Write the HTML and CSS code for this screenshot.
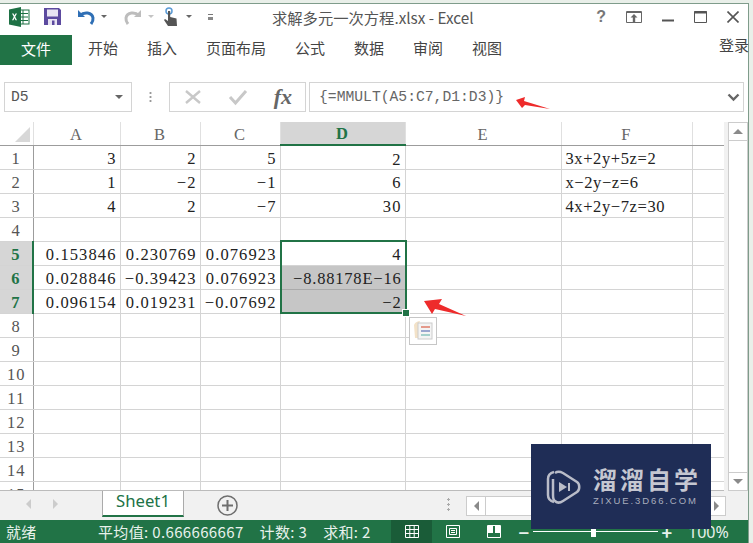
FILE: index.html
```html
<!DOCTYPE html>
<html lang="zh-CN">
<head>
  <meta charset="UTF-8">
  <title>求解多元一次方程.xlsx - Excel</title>
  <link rel="stylesheet" href="styles.css">
</head>
<body>
  <div class="window">
    <div class="titlebar">
      <div class="qat">
        <svg class="app-icon" width="21" height="20" viewBox="0 0 21 20">
          <rect x="7" y="3" width="13" height="14" fill="#fff" stroke="#1e7145"/>
          <path d="M10 6.500h9M10 10h9M10 13.500h9M14 3v14" stroke="#1e7145" fill="none"/>
          <path d="M0 2.500 12 0v20L0 17.500z" fill="#1e7145"/>
          <path d="m3 6.500 1.800 3.300L3 13.200h1.500l1-2.200 1 2.200H8L6.200 9.800 8 6.500H6.500l-1 2.100-1-2.100z" fill="#fff"/>
        </svg>
        <svg class="save-icon" width="17" height="17" viewBox="0 0 17 17">
          <path d="M0 0h15l2 2v15H0z" fill="#5c4a9f"/>
          <rect x="3" y="1.500" width="11" height="7" fill="#e8e4f2"/>
          <rect x="4" y="11" width="9" height="6" fill="#e8e4f2"/>
          <rect x="8" y="12.500" width="2.500" height="4.500" fill="#5c4a9f"/>
        </svg>
        <svg class="undo-icon" width="18" height="16" viewBox="0 0 18 16">
          <path d="M1 1v7h7" fill="#2f6fb5"/>
          <path d="M3 6.500C7 2.500 15 3 16 9c.300 2-.500 4-2 6" fill="none" stroke="#2f6fb5" stroke-width="3"/>
        </svg>
        <i class="caret"></i>
        <svg class="redo-icon" width="18" height="16" viewBox="0 0 18 16">
          <path d="M17 1v7h-7" fill="#bdbdbd"/>
          <path d="M15 6.500C11 2.500 3 3 2 9c-.300 2 .500 4 2 6" fill="none" stroke="#bdbdbd" stroke-width="3"/>
        </svg>
        <i class="caret light"></i>
        <svg class="touch-icon" width="16" height="20" viewBox="0 0 16 20">
          <circle cx="6" cy="4" r="3" fill="none" stroke="#5b9bd5" stroke-width="1.500"/>
          <path d="M5 4h2.200v6l6.300 1.500.500 7.500H5L1 13l1-1 3 2z" fill="#555"/>
        </svg>
        <i class="caret"></i>
        <i class="customize"></i>
      </div>
      <div class="doc-title">求解多元一次方程.xlsx - Excel</div>
      <div class="win-btns">
        <span class="help">?</span>
        <svg width="16" height="12" viewBox="0 0 16 12"><path d="M.5.500h15v11H.5z" fill="none" stroke="#666"/><path d="M1 1.500h14" stroke="#666"/><path d="M8 3 4.500 6.500h2.300V11h2.400V6.500h2.300z" fill="#666"/></svg>
        <svg width="12" height="12" viewBox="0 0 12 12"><path d="M0 9.500h12" stroke="#555" stroke-width="2"/></svg>
        <svg width="13" height="12" viewBox="0 0 13 12"><path d="M.5.500h12v11H.5z" fill="none" stroke="#555"/><path d="M0 1.500h13" stroke="#555" stroke-width="2"/></svg>
        <svg width="12" height="12" viewBox="0 0 12 12"><path d="m.5.500 11 11m0-11-11 11" stroke="#555" stroke-width="1.600"/></svg>
      </div>
    </div>

    <div class="tabs">
      <span class="tab-file">文件</span>
      <span>开始</span>
      <span>插入</span>
      <span>页面布局</span>
      <span>公式</span>
      <span>数据</span>
      <span>审阅</span>
      <span>视图</span>
      <span class="login">登录</span>
    </div>

    <div class="formula-bar">
      <div class="name-box">D5<i class="caret dark"></i></div>
      <div class="grip"></div>
      <div class="fx-box">
        <svg width="20" height="18" viewBox="0 0 20 18"><path d="m3 3 14 12m0-12L3 15" stroke="#c8c8c8" stroke-width="2.400"/></svg>
        <svg width="20" height="18" viewBox="0 0 20 18"><path d="m2 9 5.500 6L18 3" fill="none" stroke="#c8c8c8" stroke-width="3"/></svg>
        <span class="fx">fx</span>
      </div>
      <div class="formula">{=MMULT(A5:C7,D1:D3)}
        <svg class="chevron" width="13" height="9" viewBox="0 0 13 9"><path d="m1.500 1.500 5 5 5-5" fill="none" stroke="#666" stroke-width="2.400"/></svg>
      </div>
    </div>

    <div class="workbook">
      <div class="sheet-row">
        <div class="sheet">
          <table class="cells">
            <colgroup>
              <col class="col-head"><col class="col-a"><col class="col-b"><col class="col-c"><col class="col-d"><col class="col-e"><col class="col-f"><col class="col-g">
            </colgroup>
            <thead>
              <tr>
                <th class="corner"><i></i></th><th>A</th><th>B</th><th>C</th><th class="on-col">D</th><th>E</th><th>F</th><th class="blank"></th>
              </tr>
            </thead>
            <tbody>
              <tr><th>1</th><td>3</td><td>2</td><td>5</td><td>2</td><td></td><td class="txt">3x+2y+5z=2</td><td></td></tr>
              <tr><th>2</th><td>1</td><td>−2</td><td>−1</td><td>6</td><td></td><td class="txt">x−2y−z=6</td><td></td></tr>
              <tr><th>3</th><td>4</td><td>2</td><td>−7</td><td>30</td><td></td><td class="txt">4x+2y−7z=30</td><td></td></tr>
              <tr><th>4</th><td></td><td></td><td></td><td></td><td></td><td></td><td></td></tr>
              <tr><th class="on-row">5</th><td>0.153846</td><td>0.230769</td><td>0.076923</td><td>4</td><td></td><td></td><td></td></tr>
              <tr><th class="on-row">6</th><td>0.028846</td><td>−0.39423</td><td>0.076923</td><td class="sel">−8.88178E−16</td><td></td><td></td><td></td></tr>
              <tr><th class="on-row">7</th><td>0.096154</td><td>0.019231</td><td>−0.07692</td><td class="sel">−2</td><td></td><td></td><td></td></tr>
              <tr><th>8</th><td></td><td></td><td></td><td></td><td></td><td></td><td></td></tr>
              <tr><th>9</th><td></td><td></td><td></td><td></td><td></td><td></td><td></td></tr>
              <tr><th>10</th><td></td><td></td><td></td><td></td><td></td><td></td><td></td></tr>
              <tr><th>11</th><td></td><td></td><td></td><td></td><td></td><td></td><td></td></tr>
              <tr><th>12</th><td></td><td></td><td></td><td></td><td></td><td></td><td></td></tr>
              <tr><th>13</th><td></td><td></td><td></td><td></td><td></td><td></td><td></td></tr>
              <tr><th>14</th><td></td><td></td><td></td><td></td><td></td><td></td><td></td></tr>
              <tr><th>15</th><td></td><td></td><td></td><td></td><td></td><td></td><td></td></tr>
            </tbody>
          </table>
          <div class="selection"><i class="handle"></i></div>
          <svg class="paste-opt" width="28" height="28" viewBox="0 0 28 28">
            <rect x=".5" y=".5" width="27" height="27" fill="#fff" stroke="#c6c6c6"/>
            <path d="M5 8c1-3 4-4 6-4l-2 5 1 12H6z" fill="#f3e2c8"/>
            <rect x="9" y="6" width="14" height="16" fill="#f4f4f4" stroke="#ccc"/>
            <path d="M12 10h9" stroke="#e49a8c" stroke-width="2"/>
            <path d="M12 14h9" stroke="#9aa6cf" stroke-width="2"/>
            <path d="M12 18h9" stroke="#a5d0cc" stroke-width="2"/>
          </svg>
        </div>
        <div class="vscroll">
          <div class="vbtn"><i class="tri up"></i></div>
          <div class="vtrack"></div>
          <div class="vbtn"><i class="tri down"></i></div>
        </div>
      </div>
      <div class="sheet-tabs">
        <div class="tab-nav"><i class="tri left"></i><i class="tri right"></i></div>
        <div class="sheet-tab">Sheet1</div>
        <svg class="add-sheet" width="21" height="21" viewBox="0 0 21 21"><circle cx="10.500" cy="10.500" r="9.500" fill="none" stroke="#6e6e6e" stroke-width="1.500"/><path d="M10.500 5v11M5 10.500h11" stroke="#6e6e6e" stroke-width="2"/></svg>
        <div class="tab-grip"></div>
        <div class="hscroll">
          <div class="hbtn"><i class="tri left"></i></div>
          <div class="htrack"></div>
          <div class="hbtn"><i class="tri right"></i></div>
        </div>
      </div>
    </div>

    <div class="statusbar">
      <span class="ready">就绪</span>
      <span class="stat">平均值: 0.666666667</span>
      <span class="stat">计数: 3</span>
      <span class="stat">求和: 2</span>
      <div class="views">
        <span class="view active"><svg width="14" height="13" viewBox="0 0 14 13"><path d="M.5.500h13v12H.5zM.5 4.500h13M.5 8.500h13M4.800.500v12M9.200.500v12" fill="none" stroke="#fff"/></svg></span>
        <span class="view"><svg width="14" height="13" viewBox="0 0 14 13"><path d="M.5.500h13v12H.5zM3.500 3.500h7v6h-7zM5 5.500h4M5 7.500h4" fill="none" stroke="#fff"/></svg></span>
        <span class="view"><svg width="14" height="13" viewBox="0 0 14 13"><path d="M.5.500h13v12H.5z" fill="none" stroke="#fff"/><path d="M1 1h5v7H1zM8 1h5v7H8z" fill="#fff"/></svg></span>
      </div>
      <div class="zoom">
        <span class="zoom-sign">−</span>
        <div class="slider"><i></i></div>
        <span class="zoom-sign">+</span>
        <span class="zoom-val">100%</span>
      </div>
    </div>
  </div>

  <!-- red arrows someone drew on the screenshot -->
  <svg class="arrow arrow-formula" width="34" height="12" viewBox="0 0 34 12"><path d="M0 3 9 0 8 4l26 8-25-4-3 3z" fill="#ee2b2b"/></svg>
  <svg class="arrow arrow-cell" width="42" height="18" viewBox="0 0 42 18"><path d="M0 2 18 0l-3 5 27 12-31-7-3 5z" fill="#ee2b2b"/></svg>

  <div class="watermark">
    <svg width="36" height="36" viewBox="0 0 36 36">
      <path d="M8 3C4 4 2 7 2 10v16c0 3 2 6 6 7" fill="none" stroke="#b9bcc8" stroke-width="2.500"/>
      <path d="M9 4c3-2 6-1 8 0l14 9c3 2 3 8 0 10L17 32c-3 2-6 2-8 0-2-1-2-4-2-6V10" fill="none" stroke="#b9bcc8" stroke-width="2.500"/>
      <path d="M13 13l8 5-8 5z" fill="#b9bcc8"/>
      <path d="M23 14v8" stroke="#b9bcc8" stroke-width="2"/>
    </svg>
    <div class="wm-text">
      <div class="wm-cn">溜溜自学</div>
      <div class="wm-en">ZIXUE.3D66.COM</div>
    </div>
  </div>
</body>
</html>
```

FILE: styles.css
```css
* {
  box-sizing: border-box;
}

html, body {
  margin: 0;
  height: 100%;
  overflow: hidden;
}

body {
  width: 753px;
  height: 543px;
  position: relative;
  background-color: #e9efe9;
  font-family: "Noto Sans CJK SC", sans-serif;
  color: #444;
}

.window {
  width: 749px;
  height: 540px;
  margin-top: 3px;
  background-color: #fff;
  border-top: 1px solid #7f9c8b;
  border-right: 1px solid #7f9c8b;
  display: flex;
  flex-direction: column;
}

/* title bar */
.titlebar {
  height: 31px;
  padding-bottom: 6px;
  display: flex;
  align-items: center;
  flex: none;
  position: relative;
}

.qat {
  display: flex;
  align-items: center;
  padding-left: 9px;
  width: 272px;
}

.save-icon {
  margin-left: 14px;
}

.undo-icon {
  margin-left: 16px;
}

.redo-icon {
  margin-left: 17px;
}

.touch-icon {
  margin-left: 9px;
}

.caret {
  display: inline-block;
  width: 0;
  height: 0;
  margin-left: 6px;
  border-left: 3px solid transparent;
  border-right: 3px solid transparent;
  border-top: 3px solid #666;
}

.caret.light {
  border-top-color: #c4c4c4;
}

.touch-icon + .caret {
  margin-left: 7px;
}

.customize {
  width: 5px;
  height: 6px;
  margin-left: 16px;
  border-top: 1px solid #777;
  border-bottom: 3px solid #888;
}

.doc-title {
  font-size: 15.300px;
  white-space: nowrap;
  color: #555;
}

.win-btns {
  margin-left: auto;
  display: flex;
  align-items: center;
  gap: 20px;
  padding-right: 9px;
}

.help {
  font-family: "Liberation Sans", sans-serif;
  font-weight: bold;
  font-size: 16px;
  color: #777;
}

/* ribbon tabs */
.tabs {
  height: 30px;
  padding-bottom: 6px;
  display: flex;
  align-items: center;
  flex: none;
  gap: 29px;
  font-size: 15px;
  color: #444;
  position: relative;
}

.tab-file {
  width: 72px;
  height: 30px;
  margin-top: 6px;
  margin-right: -13px;
  line-height: 28px;
  text-align: center;
  background-color: #217346;
  color: #fff;
}

.login {
  position: absolute;
  top: -1px;
  right: -1px;
}

/* formula bar */
.formula-bar {
  height: 30px;
  margin-top: 17px;
  padding: 0 4px;
  display: flex;
  flex: none;
  font-family: "Liberation Mono", monospace;
  font-size: 14.700px;
}

.name-box, .fx-box, .formula {
  border: 1px solid #d4d4d4;
  display: flex;
  align-items: center;
}

.name-box {
  width: 128px;
  padding: 0 6px;
  color: #555;
  justify-content: space-between;
}

.caret.dark {
  border-left-width: 4px;
  border-right-width: 4px;
  border-top-width: 4px;
  margin-right: 2px;
}

.grip {
  width: 37px;
  flex: none;
  margin: 9px 0;
  background: radial-gradient(circle, #999 1px, transparent 1.200px) center top / 3px 4px repeat-y;
}

.fx-box {
  width: 137px;
  justify-content: space-between;
  padding: 0 13px;
}

.fx {
  font-family: "Liberation Serif", serif;
  font-style: italic;
  font-weight: bold;
  font-size: 22px;
  color: #666;
}

.formula {
  margin-left: 3px;
  flex: 1;
  padding-left: 9px;
  color: #666;
  justify-content: space-between;
}

.chevron {
  margin-right: 3px;
}

/* sheet */
.workbook {
  flex: 1;
  margin-top: 10px;
  display: flex;
  flex-direction: column;
  min-height: 0;
}

.sheet-row {
  flex: 1;
  display: flex;
  min-height: 0;
  overflow: hidden;
}

.sheet {
  width: 724px;
  position: relative;
  overflow: hidden;
  border-bottom: 1px solid #bbb;
}

.cells {
  table-layout: fixed;
  width: 724px;
  border-collapse: collapse;
  font-family: "Liberation Serif", serif;
  font-size: 16.500px;
  letter-spacing: 1.100px;
  line-height: 1;
  color: #222;
}

.col-head { width: 33px; }
.col-a { width: 87px; }
.col-b { width: 80px; }
.col-c { width: 80px; }
.col-d { width: 125px; }
.col-e { width: 156px; }
.col-f { width: 131px; }
.col-g { width: 32px; }

.cells thead th {
  height: 23px;
  font-weight: normal;
  color: #666;
  border-left: 1px solid #e0e0e0;
  border-bottom: 1px solid #9c9c9c;
  padding: 3px 0 0;
}

.cells thead .corner {
  position: relative;
  border-left: none;
}

.corner i {
  position: absolute;
  right: 3px;
  bottom: 3px;
  width: 0;
  height: 0;
  border-left: 15px solid transparent;
  border-bottom: 15px solid #d8d8d8;
}

.cells thead .on-col {
  background-color: #d6d6d6;
  color: #217346;
  font-weight: bold;
  border-bottom: 2px solid #217346;
}

.cells tbody th {
  height: 24px;
  font-weight: normal;
  color: #555;
  text-align: center;
  padding: 5px 0 0;
  border-right: 1px solid #9c9c9c;
  border-bottom: 1px solid #d4d4d4;
}

.cells tbody .on-row {
  background-color: #d6d6d6;
  color: #217346;
  font-weight: bold;
  border-right: 2px solid #217346;
}

.cells td {
  height: 24px;
  padding: 5px 3px 0 0;
  text-align: right;
  white-space: nowrap;
  overflow: hidden;
  border-right: 1px solid #d4d4d4;
  border-bottom: 1px solid #d4d4d4;
}

.cells td.txt {
  text-align: left;
  padding-left: 4px;
  letter-spacing: 0.600px;
}

.cells td.sel {
  background-color: #c6c6c6;
  border-right-color: #c6c6c6;
  border-bottom-color: #aaa;
  letter-spacing: 0.800px;
}

.selection {
  position: absolute;
  left: 280px;
  top: 118px;
  width: 127px;
  height: 74px;
  border: 2px solid #217346;
  pointer-events: none;
}

.handle {
  position: absolute;
  right: -4px;
  bottom: -4px;
  width: 6px;
  height: 6px;
  background-color: #217346;
  outline: 1px solid #fff;
}

.paste-opt {
  position: absolute;
  left: 409px;
  top: 195px;
}

/* scrollbars */
.vscroll {
  flex: 1;
  padding: 0 0 0 4px;
  background-color: #f1f1f1;
  display: flex;
  flex-direction: column;
}

.vbtn {
  width: 20px;
  height: 19px;
  flex: none;
  background-color: #fff;
  border: 1px solid #ccc;
  display: flex;
  align-items: center;
  justify-content: center;
}

.vtrack {
  flex: 1;
  width: 20px;
  background-color: #fff;
  border-left: 1px solid #ccc;
  border-right: 1px solid #ccc;
}

.tri {
  display: inline-block;
  width: 0;
  height: 0;
  border: 5px solid transparent;
}

.tri.up {
  border-top: none;
  border-bottom: 5px solid #8a8a8a;
}

.tri.down {
  border-bottom: none;
  border-top: 5px solid #8a8a8a;
}

.tri.left {
  border-left: none;
  border-right: 5px solid #8a8a8a;
}

.tri.right {
  border-right: none;
  border-left: 5px solid #8a8a8a;
}

.sheet-tabs {
  height: 29px;
  flex: none;
  display: flex;
  align-items: flex-start;
  background-color: #f1f1f1;
}

.tab-nav {
  width: 102px;
  height: 25px;
  padding-left: 26px;
  display: flex;
  align-items: center;
  gap: 22px;
}

.tab-nav .tri {
  border-right-color: #ccc;
  border-left-color: #ccc;
}

.sheet-tab {
  width: 82px;
  height: 27px;
  margin-top: -1px;
  text-align: center;
  line-height: 22px;
  font-family: "Noto Sans", sans-serif;
  font-size: 16.700px;
  color: #217346;
  background-color: #fff;
  border-left: 1px solid #aaa;
  border-right: 1px solid #aaa;
  border-bottom: 2px solid #217346;
}

.add-sheet {
  margin: 4px 0 0 33px;
}

.tab-grip {
  width: 3px;
  height: 15px;
  margin: 6px 0 0 209px;
  background: radial-gradient(circle, #aaa 1px, transparent 1.200px) center top / 3px 5px repeat-y;
}

.hscroll {
  margin: 5px 0 0 16px;
  height: 20px;
  width: 260px;
  display: flex;
  background-color: #fff;
  border: 1px solid #ccc;
}

.hbtn {
  width: 18px;
  height: 18px;
  flex: none;
  display: flex;
  align-items: center;
  justify-content: center;
}

.htrack {
  flex: 1;
  border-left: 1px solid #ccc;
  border-right: 1px solid #ccc;
}

/* status bar */
.statusbar {
  height: 23px;
  flex: none;
  display: flex;
  align-items: center;
  background-color: #217346;
  color: #e8f1ec;
  font-size: 15px;
  letter-spacing: 0.350px;
  padding-left: 6px;
}

.ready {
  width: 92px;
}

.stat {
  margin-right: 16px;
}

.views {
  position: absolute;
  left: 391px;
  bottom: 0;
  height: 23px;
  display: flex;
}

.view {
  width: 41px;
  display: flex;
  align-items: center;
  justify-content: center;
}

.view.active {
  background-color: #1a5c38;
}

.zoom {
  position: absolute;
  left: 518px;
  bottom: 0;
  height: 23px;
  width: 228px;
  display: flex;
  align-items: center;
  gap: 3px;
}

.zoom-sign {
  font-size: 18px;
  font-weight: bold;
  line-height: 1;
  width: 12px;
  text-align: center;
}

.slider {
  width: 125px;
  height: 1px;
  background-color: #fff;
  position: relative;
}

.slider i {
  position: absolute;
  left: 58px;
  top: -5px;
  width: 5px;
  height: 11px;
  background-color: #fff;
}

.zoom-val {
  margin-left: 12px;
  font-size: 16px;
  letter-spacing: 0;
  font-family: "Noto Sans", sans-serif;
}

/* overlays */
.arrow {
  position: absolute;
}

.arrow-formula {
  left: 516px;
  top: 97px;
}

.arrow-cell {
  left: 424px;
  top: 299px;
}

.watermark {
  position: absolute;
  left: 531px;
  top: 444px;
  width: 180px;
  height: 85px;
  background-color: #1f2d56;
  display: flex;
  align-items: center;
  padding-left: 15px;
  gap: 11px;
}

.wm-cn {
  font-size: 24px;
  line-height: 24px;
  letter-spacing: 3px;
  font-weight: bold;
  color: #c5c7d1;
  white-space: nowrap;
}

.wm-en {
  margin-top: 5px;
  font-family: "Liberation Sans", sans-serif;
  font-size: 9.500px;
  line-height: 10px;
  letter-spacing: 1.900px;
  color: #a9adbd;
  white-space: nowrap;
}
```
